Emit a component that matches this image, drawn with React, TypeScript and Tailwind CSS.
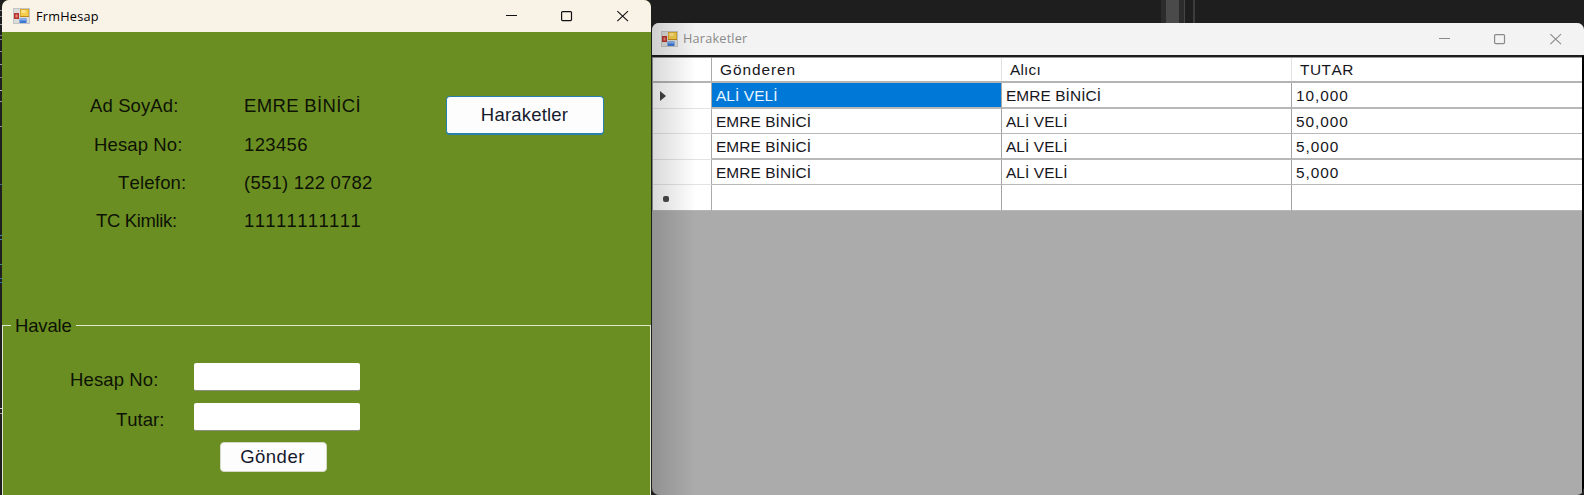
import React from "react";

function FormIcon() {
  return (
    <svg width="17" height="16" viewBox="0 0 17 16" className="block shrink-0">
      <rect x="0.5" y="0.5" width="16" height="15" fill="#dcdcda" stroke="#c3c5c5" />
      <rect x="1" y="5" width="5" height="6" fill="#b8342c" />
      <rect x="2.5" y="6.5" width="2" height="3" fill="#e5897e" />
      <rect x="7" y="1" width="9" height="8" fill="#c08a1c" />
      <rect x="7.5" y="1.5" width="8" height="6.5" fill="#f5cd4a" />
      <rect x="8.5" y="2" width="4" height="3" fill="#fbe28c" />
      <rect x="6.5" y="10.5" width="7" height="4.5" fill="#3c78d4" />
      <rect x="7" y="11" width="6" height="1.5" fill="#82aff0" />
    </svg>
  );
}

function Controls({ color }: { color: string }) {
  return (
    <svg width="124" height="12" viewBox="0 0 124 12" fill="none" stroke={color} className="block shrink-0">
      <path d="M0 5.5H11" />
      <rect x="55.6" y="1.6" width="9.9" height="9" rx="1" strokeWidth="1.2" />
      <path d="M111.3 1.2L122 11.2M122 1.2L111.3 11.2" strokeWidth="1.1" />
    </svg>
  );
}

const details = [
  { label: "Ad SoyAd:", value: "EMRE BİNİCİ", l: "pl-[88px] tracking-[0.12px]", v: "tracking-[0.35px]" },
  { label: "Hesap No:", value: "123456", l: "pl-[92px] tracking-[0.12px]", v: "tracking-[0.35px]" },
  { label: "Telefon:", value: "(551) 122 0782", l: "pl-[116px] tracking-[0.2px]", v: "tracking-[0.22px]" },
  { label: "TC Kimlik:", value: "11111111111", l: "pl-[94px] tracking-[-0.35px]", v: "tracking-[0.35px]" },
];

function AccountWindow() {
  return (
    <section className="absolute left-[2px] top-0 z-10 flex h-[495px] w-[649px] flex-col overflow-hidden rounded-t-[7px] bg-[#6b8e23] text-[18.5px] text-[#0d1204]">
      <header className="flex h-8 shrink-0 items-center bg-[#f9f2e7] pl-[11px] pr-[21px] text-black">
        <FormIcon />
        <h1 className="ml-[6px] flex-1 font-['Open_Sans',sans-serif] text-[12.7px] leading-none tracking-[0.25px]">FrmHesap</h1>
        <Controls color="#111" />
      </header>
      <div className="flex h-[282px] shrink-0 pt-[54px]">
        <dl className="w-[444px] pt-px">
          {details.map((d) => (
            <div key={d.label} className="flex h-[38.4px] items-center whitespace-nowrap">
              <dt className={`w-[242px] ${d.l}`}>{d.label}</dt>
              <dd className={d.v}>{d.value}</dd>
            </div>
          ))}
        </dl>
        <button className="mt-[10px] h-[39px] w-[158px] rounded-[4px] border border-b-2 border-[#2880ae] bg-[#fdfdfd] pr-px tracking-[0.2px] text-[#151a2c]">
          Haraketler
        </button>
      </div>
      <fieldset className="h-[190px] min-w-0 border border-b-0 border-[#dfe6cf]">
        <legend className="ml-[8px] h-[22px] pl-[4px] pr-[4px] leading-[24px] tracking-[-0.15px]">
          Havale
        </legend>
        <div className="mt-[21px] flex h-[40px] items-center">
          <label className="w-[191px] pl-[67px] pt-[6px] tracking-[0.12px]">Hesap No:</label>
          <input className="h-[28px] w-[166px] rounded-[2px] border-b border-[#8a8f80] bg-white outline-none" />
        </div>
        <div className="flex h-[40px] items-center">
          <label className="w-[191px] pl-[113px] pt-[5px]">Tutar:</label>
          <input className="h-[28px] w-[166px] rounded-[2px] border-b border-[#8a8f80] bg-white outline-none" />
        </div>
        <button className="ml-[217px] mt-[5px] h-[30px] w-[107px] rounded-[4px] border border-[#d5dac8] bg-[#fdfdfd] pr-[2px] tracking-[0.5px] text-[#151a2c]">
          Gönder
        </button>
      </fieldset>
    </section>
  );
}

const transfers = [
  ["ALİ VELİ", "EMRE BİNİCİ", "10,000"],
  ["EMRE BİNİCİ", "ALİ VELİ", "50,000"],
  ["EMRE BİNİCİ", "ALİ VELİ", "5,000"],
  ["EMRE BİNİCİ", "ALİ VELİ", "5,000"],
  ["", "", ""],
];

const rowHeights = ["h-[26px]", "h-[25px]", "h-[26px]", "h-[25px]", "h-[26px]"];
const rowLines = ["border-b-2", "border-b", "border-b-2", "border-b", "border-b"];
const columns = "grid grid-cols-[59px_290px_290px_1fr]";

function TransfersWindow() {
  return (
    <section className="absolute left-[652px] top-[23px] flex h-[472px] w-[932px] flex-col overflow-hidden rounded-[7px] bg-[#ababab] text-[15.4px] text-[#16161c]">
      <header className="flex h-8 shrink-0 items-center bg-[#f3f3f3] pb-px pl-[9px] pr-[21px] text-[#8a8a8a]">
        <FormIcon />
        <h1 className="ml-[5px] flex-1 font-['Open_Sans',sans-serif] text-[12.7px] leading-none tracking-[0.2px]">Haraketler</h1>
        <Controls color="#8a8a8a" />
      </header>
      <div className="flex-1 border-r-2 border-t-2 border-r-black border-t-[#1c1c1c]">
        <div className="border-l border-t border-[#999]">
          <div className={`${columns} h-[25px] border-b-2 border-[#b4b4b4] bg-white leading-[23px]`}>
            <span className="border-r border-[#aaa]" />
            <span className="border-r border-[#e2e2e2] pl-[8px] tracking-[0.95px]">Gönderen</span>
            <span className="border-r border-[#e2e2e2] pl-[8px] tracking-[0.2px]">Alıcı</span>
            <span className="pl-[8px] tracking-[0.5px]">TUTAR</span>
          </div>
          {transfers.map((row, i) => (
            <div key={i} className={`${columns} ${rowHeights[i]} bg-white leading-[25px]`}>
              <span className={`flex items-center border-r border-b border-r-[#aaa] ${i === 4 ? "border-b-[#b4b4b4] pl-[10px]" : "border-b-[#e3e3e3] pl-[7px]"}`}>
                {i === 0 && (
                  <svg width="6" height="10" viewBox="0 0 6 10" className="mt-px">
                    <path d="M0 0L6 5L0 10Z" fill="#444" />
                  </svg>
                )}
                {i === 4 && <i className="mt-[2px] block size-[6px] rounded-[2px] bg-[#4a4a4a]" />}
              </span>
              {row.map((cell, j) => (
                <span
                  key={j}
                  className={`${rowLines[i]} overflow-hidden whitespace-nowrap border-b-[#b8b8b8] ${j < 2 ? "border-r border-r-[#a4a4a4] pl-[4px] tracking-[0.1px]" : "pl-[4px] tracking-[0.95px]"} ${i === 0 && j === 0 ? "bg-[#0078d7] text-[#e9f5ff]" : ""}`}
                >
                  {cell}
                </span>
              ))}
            </div>
          ))}
        </div>
      </div>
      <div className="pointer-events-none absolute inset-y-0 left-0 w-[44px] bg-linear-to-r from-black/15 to-transparent" />
    </section>
  );
}

const editorMarks = [
  "mt-[10px] bg-[#8d8d95]",
  "mt-[5px] bg-[#77777d]",
  "mt-[7px] bg-[#9a9aa2]",
  "mt-[10px] bg-[#77777d]",
  "mt-[3px] bg-[#85858c]",
  "mt-[11px] bg-[#8d8d95]",
  "mt-[12px] bg-[#9a9aa2]",
  "mt-[12px] bg-[#77777d]",
  "mt-[12px] bg-[#b5b5bb]",
  "mt-[10px] bg-[#9a9aa2]",
  "mt-[24px] bg-[#8d8d95]",
  "mt-[57px] bg-[#3f6a88]",
  "mt-[50px] bg-[#4a83a8]",
  "mt-[3px] bg-[#4a83a8]",
  "mt-[24px] bg-[#3d8f7a]",
  "mt-[13px] bg-[#2f6fb0]",
  "mt-[3px] bg-[#2f6fb0]",
  "mt-[125px] bg-[#c9c9c9]",
  "mt-[4px] bg-[#b0a0a0]",
];

export default function App() {
  return (
    <main className="h-[495px] w-[1589px] overflow-hidden bg-white font-['Liberation_Sans',Arial,sans-serif] [font-kerning:none]">
      <div className="relative flex h-full w-[1584px] overflow-hidden bg-[#1e1e1e]">
        <div className="flex h-full w-[2px] flex-col">
          {editorMarks.map((mark, i) => (
            <i key={i} className={`block h-px w-full shrink-0 ${mark}`} />
          ))}
        </div>
        <div className="ml-[1159px] flex h-[23px]">
          <i className="w-[5px] bg-[#2c2c2c]" />
          <i className="w-[13px] bg-[#4a4a4a]" />
          <i className="w-[5px] bg-[#2c2c2c]" />
          <i className="w-px bg-[#464646]" />
          <i className="ml-[8px] w-[2px] bg-[#3c3c3c]" />
        </div>
        <TransfersWindow />
        <AccountWindow />
      </div>
    </main>
  );
}
